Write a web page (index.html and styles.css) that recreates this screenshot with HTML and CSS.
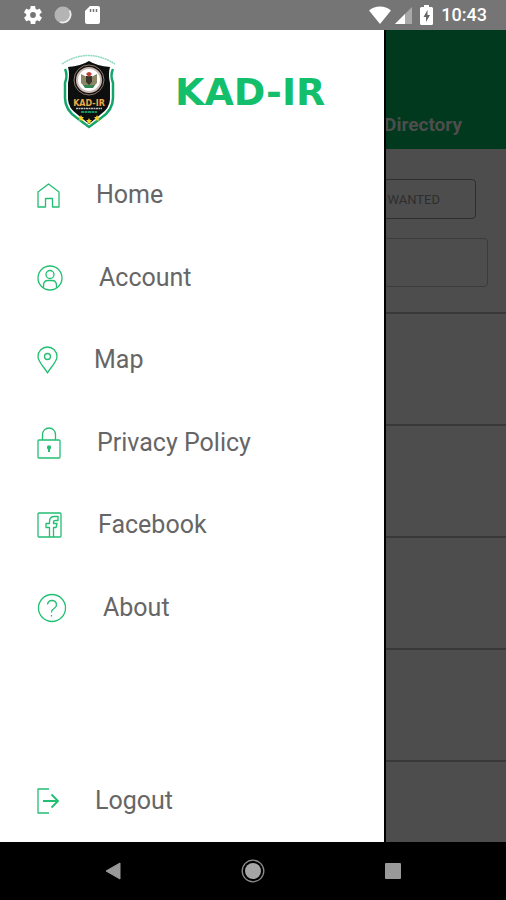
FILE: index.html
```html
<!DOCTYPE html>
<html lang="en">
<head>
    <meta charset="UTF-8">
    <meta name="viewport" content="width=device-width, initial-scale=1.0">
    <title>KAD-IR</title>
    <link rel="stylesheet" href="styles.css">
</head>
<body>
    <header class="status-bar">
        <div class="status-group status-left">
            <svg width="18" height="18" viewBox="2 2 20 20" fill="#fff"><path d="M19.4 13a7.500 7.500 0 0 0 0-2l2.100-1.600c.2-.2.200-.4.100-.6l-2-3.500c-.1-.2-.4-.3-.6-.2l-2.500 1a7 7 0 0 0-1.700-1l-.4-2.700c0-.2-.2-.4-.5-.4h-4c-.2 0-.4.200-.5.400L9 5.100a7 7 0 0 0-1.700 1l-2.500-1c-.2-.1-.5 0-.6.200l-2 3.500c-.1.200-.1.500.100.6L4.500 11a7.500 7.500 0 0 0 0 2l-2.100 1.600c-.2.200-.3.400-.1.600l2 3.500c.1.200.4.300.6.200l2.500-1a7 7 0 0 0 1.700 1l.4 2.700c0 .2.200.4.500.4h4c.2 0 .5-.2.500-.4l.4-2.700a7 7 0 0 0 1.700-1l2.500 1c.2.100.5 0 .6-.2l2-3.500c.1-.2.100-.5-.1-.6zM12 15.200a3.200 3.200 0 1 1 0-6.400 3.200 3.200 0 0 1 0 6.400z"/></svg>
            <svg width="18" height="18" viewBox="0 0 18 18"><circle cx="9" cy="9" r="8.500" fill="#b4b4b4"/><path d="M15.500 4.500A8 8 0 0 1 6 16" fill="none" stroke="#eee" stroke-width="1.600"/></svg>
            <svg width="16" height="20" viewBox="0 0 16 20"><path d="M6 1h8a2 2 0 0 1 2 2v14a2 2 0 0 1-2 2H3a2 2 0 0 1-2-2V6z" fill="#fff"/><path d="M6.500 4v3M9.500 4v3M12.500 4v3" stroke="#757575" stroke-width="1.500"/></svg>
        </div>
        <div class="status-group status-right">
            <svg width="22" height="18" viewBox="0 0 22 18"><path d="M0 4.500C6-.8 16-.8 22 4.500L11 18z" fill="#fff"/></svg>
            <svg class="signal" width="17" height="17" viewBox="0 0 17 17"><path d="M17 0v17H0z" fill="#a9a9a9"/><path d="M10 7v10H0z" fill="#fff"/></svg>
            <svg class="battery" width="13" height="20" viewBox="0 0 13 20"><path d="M4 0h5v2h2.500A1.500 1.500 0 0 1 13 3.500v15a1.500 1.500 0 0 1-1.500 1.500h-10A1.500 1.500 0 0 1 0 18.500v-15A1.500 1.500 0 0 1 1.500 2H4z" fill="#fff"/><path d="M7.500 5L3.500 12H6v5l4-7H7.500z" fill="#666"/></svg>
            <span class="clock">10:43</span>
        </div>
    </header>

    <div class="screen">
        <main class="page">
            <div class="page-header">
                <h1>Directory</h1>
            </div>
            <div class="filters">
                <button type="button" class="wanted">WANTED</button>
                <input type="text" class="search" aria-label="Search">
            </div>
            <ul class="results">
                <li></li>
                <li></li>
                <li></li>
                <li></li>
                <li></li>
            </ul>
        </main>

        <aside class="drawer">
            <div class="brand">
                <svg class="shield" width="56" height="76" viewBox="0 0 56 76">
                    <path d="M1 10Q27-7 54 10" fill="none" stroke="#8fd9c4" stroke-width="1.500" stroke-dasharray="2 .5"/>
                    <path d="M4 15q3 6 0 14v15q0 12 12 20l12 9 12-9q12-8 12-20V29q-3-8 0-14" fill="none" stroke="#15a56b" stroke-width="2.500"/>
                    <path d="M7 13q13-1 21-6 8 5 21 6-2 7 0 16v16q0 9-10 16l-11 9-11-9q-10-7-10-16V29q2-9 0-16z" fill="#0d0f0f"/>
                    <circle cx="28" cy="26" r="15" fill="#111" stroke="#8c7a68" stroke-width="1"/>
                    <circle cx="28" cy="26" r="12" fill="#fff" stroke="#cbb9b4" stroke-width="2"/>
                    <path d="M20 20l6 3 2-4 2 4 6-3v9l-3 3H23l-3-3z" fill="#8b8664"/>
                    <path d="M25 22h6v6l-3 3-3-3z" fill="#3b352d"/>
                    <path d="M25 20q3-4 6 0l-3 3z" fill="#bc4038"/>
                    <path d="M22 31h12l-2 3h-8z" fill="#348753"/>
                    <text x="28" y="52" text-anchor="middle">KAD-IR</text>
                    <path d="M15 54.500h26" stroke="#bbb" stroke-width="1.500" stroke-dasharray="2 .5"/>
                    <path d="M20 58h16" stroke="#178d61" stroke-width="2" stroke-dasharray="3 .5"/>
                    <path id="star" d="M20 61l1 2h2l-1.500 1.500.5 2.500-2-1-2 1 .5-2.500L17 63h2z" fill="#f5cf25"/>
                    <use href="#star" x="8" y="3"/>
                    <use href="#star" x="16"/>
                </svg>
                <span class="wordmark">KAD-IR</span>
            </div>

            <nav class="menu" aria-label="Main">
                <a href="#home">
                    <svg width="23" height="25" viewBox="0 0 23 25"><path d="M1 9L11.500 1 22 9v15h-6.500v-8.500h-7V24H1z"/></svg>
                    Home
                </a>
                <a href="#account">
                    <svg width="26" height="26" viewBox="0 0 26 26"><circle cx="13" cy="13" r="12"/><circle cx="13" cy="9.500" r="4"/><path d="M6.500 23v-2.500q0-5 4.500-5h4q4.500 0 4.500 5V23"/></svg>
                    Account
                </a>
                <a href="#map">
                    <svg width="21" height="28" viewBox="0 0 21 28"><path d="M10.500 27C8 22 1 16 1 10.500a9.500 9.500 0 0 1 19 0C20 16 13 22 10.500 27z"/><circle cx="10.500" cy="10.500" r="3"/></svg>
                    Map
                </a>
                <a href="#privacy">
                    <svg width="24" height="32" viewBox="0 0 24 32"><rect x="1" y="13" width="22" height="18" rx="1"/><path d="M5.500 13V7.500a6.500 6.500 0 0 1 13 0V13"/><path d="M12 22v3" stroke-width="2"/><circle cx="12" cy="20.500" r="1.500" class="solid"/></svg>
                    Privacy Policy
                </a>
                <a href="#facebook">
                    <svg width="25" height="26" viewBox="0 0 25 26"><rect x="1" y="1" width="23" height="24" rx="1"/><path d="M12.500 25v-9.500H9v-4h3.500V9.500q0-5 5-5H21v4h-2.500q-2 0-2 1.500v1.500H20l-1 4h-2.500V25"/></svg>
                    Facebook
                </a>
                <a href="#about">
                    <svg width="30" height="30" viewBox="0 0 30 30"><circle cx="15" cy="15" r="13.500"/><path d="M10.500 11.500q.5-4 4.500-4t4.500 4q0 2.500-2.500 4t-2.500 3.500v.5M14.500 22v1.500"/></svg>
                    About
                </a>
            </nav>

            <button type="button" class="logout">
                <svg width="22" height="26" viewBox="0 0 22 26"><path d="M12 1H1v24h11"/><path d="M6 13h14.500M14.500 6.500L21 13l-6.500 6.500" stroke-width="1.800"/></svg>
                Logout
            </button>
        </aside>
    </div>

    <footer class="nav-bar">
        <button type="button" aria-label="Back"><svg width="18" height="20" viewBox="0 0 18 20"><path d="M16 2v16L2 10z" fill="#999" stroke="#999" stroke-width="1" stroke-linejoin="round"/></svg></button>
        <button type="button" aria-label="Home"><svg width="24" height="24" viewBox="0 0 24 24"><circle cx="12" cy="12" r="8" fill="#a6a6a6"/><circle cx="12" cy="12" r="10.800" fill="none" stroke="#8c8c8c" stroke-width="1.300"/></svg></button>
        <button type="button" aria-label="Recent apps"><svg width="16" height="16" viewBox="0 0 16 16"><rect width="16" height="16" rx="1" fill="#999"/></svg></button>
    </footer>
</body>
</html>
```
FILE: styles.css
```css
* {
    box-sizing: border-box;
}
body {
    margin: 0;
    min-height: 100vh;
    display: flex;
    flex-direction: column;
    font-family: Roboto, "Liberation Sans", sans-serif;
    background-color: #000;
}
svg {
    display: block;
    flex-shrink: 0;
}

/* system bars */
.status-bar {
    height: 30px;
    padding: 0 19px 0 24px;
    display: flex;
    justify-content: space-between;
    align-items: center;
    background-color: #757575;
    color: #fff;
}
.status-group {
    display: flex;
    align-items: center;
}
.status-left {
    gap: 12px;
}
.status-right {
    gap: 8px;
}
.signal {
    margin-left: -4px;
}
.clock {
    font-size: 18px;
    font-weight: 500;
    line-height: 30px;
}
.nav-bar {
    height: 58px;
    padding: 0 8.5%;
    display: flex;
    background-color: #000;
}
.nav-bar button {
    flex: 1;
    display: flex;
    justify-content: center;
    align-items: center;
    padding: 0;
    border: 0;
    background: none;
}

/* dimmed page under the drawer */
.screen {
    position: relative;
    flex: 1;
    display: flex;
}
.page {
    flex: 1;
    background-color: #4d4d4d;
}
.page-header {
    height: 119px;
    padding: 0 44px 12px;
    display: flex;
    justify-content: flex-end;
    align-items: flex-end;
    background-color: #00391e;
}
.page-header h1 {
    margin: 0;
    font-size: 19px;
    line-height: 24px;
    font-weight: 700;
    color: #4d4d4d;
}
.filters {
    height: 163px;
    padding: 30px 18px 0;
    display: flex;
    flex-direction: column;
    gap: 19px;
}
.wanted {
    align-self: flex-end;
    height: 40px;
    margin-right: 12px;
    padding: 0 35px;
    border: 1px solid #2e2e2e;
    border-radius: 4px;
    background: none;
    font-family: inherit;
    font-size: 13px;
    color: #2e2e2e;
}
.search {
    width: 100%;
    height: 49px;
    border: 1px solid #3b3b3b;
    border-radius: 4px;
    background: none;
}
.results {
    margin: 0;
    padding: 0;
    list-style: none;
}
.results li {
    height: 112px;
    border-top: 2px solid #383838;
}
.results li:last-child {
    height: 82px;
}

/* drawer */
.drawer {
    position: absolute;
    top: 0;
    bottom: 0;
    left: 0;
    width: 76%;
    display: flex;
    flex-direction: column;
    background-color: #fff;
    border-right: 1px solid #000;
    box-shadow: 1px 0 0 #000;
}
.brand {
    height: 124px;
    padding-left: 61px;
    display: flex;
    align-items: center;
    gap: 58px;
}
.shield text {
    font-family: "DejaVu Sans", sans-serif;
    font-size: 8px;
    font-weight: 700;
    fill: #eaa945;
}
.wordmark {
    font-family: "DejaVu Sans", sans-serif;
    font-size: 38px;
    font-weight: 700;
    line-height: 40px;
    color: #14bf6b;
}
.menu {
    height: 495px;
    display: flex;
    flex-direction: column;
}
.menu a,
.logout {
    padding: 0 0 0 37px;
    display: flex;
    align-items: center;
    gap: 36px;
    font-family: inherit;
    font-size: 25px;
    line-height: 32px;
    color: #666;
    text-decoration: none;
}
.menu a {
    flex: 1;
}
.menu svg,
.logout svg {
    fill: none;
    stroke: #22bf73;
    stroke-width: 1.3;
    stroke-linejoin: round;
}
.menu svg .solid {
    fill: #22bf73;
}
.logout {
    height: 82px;
    margin-top: auto;
    border: 0;
    background: none;
}
```
